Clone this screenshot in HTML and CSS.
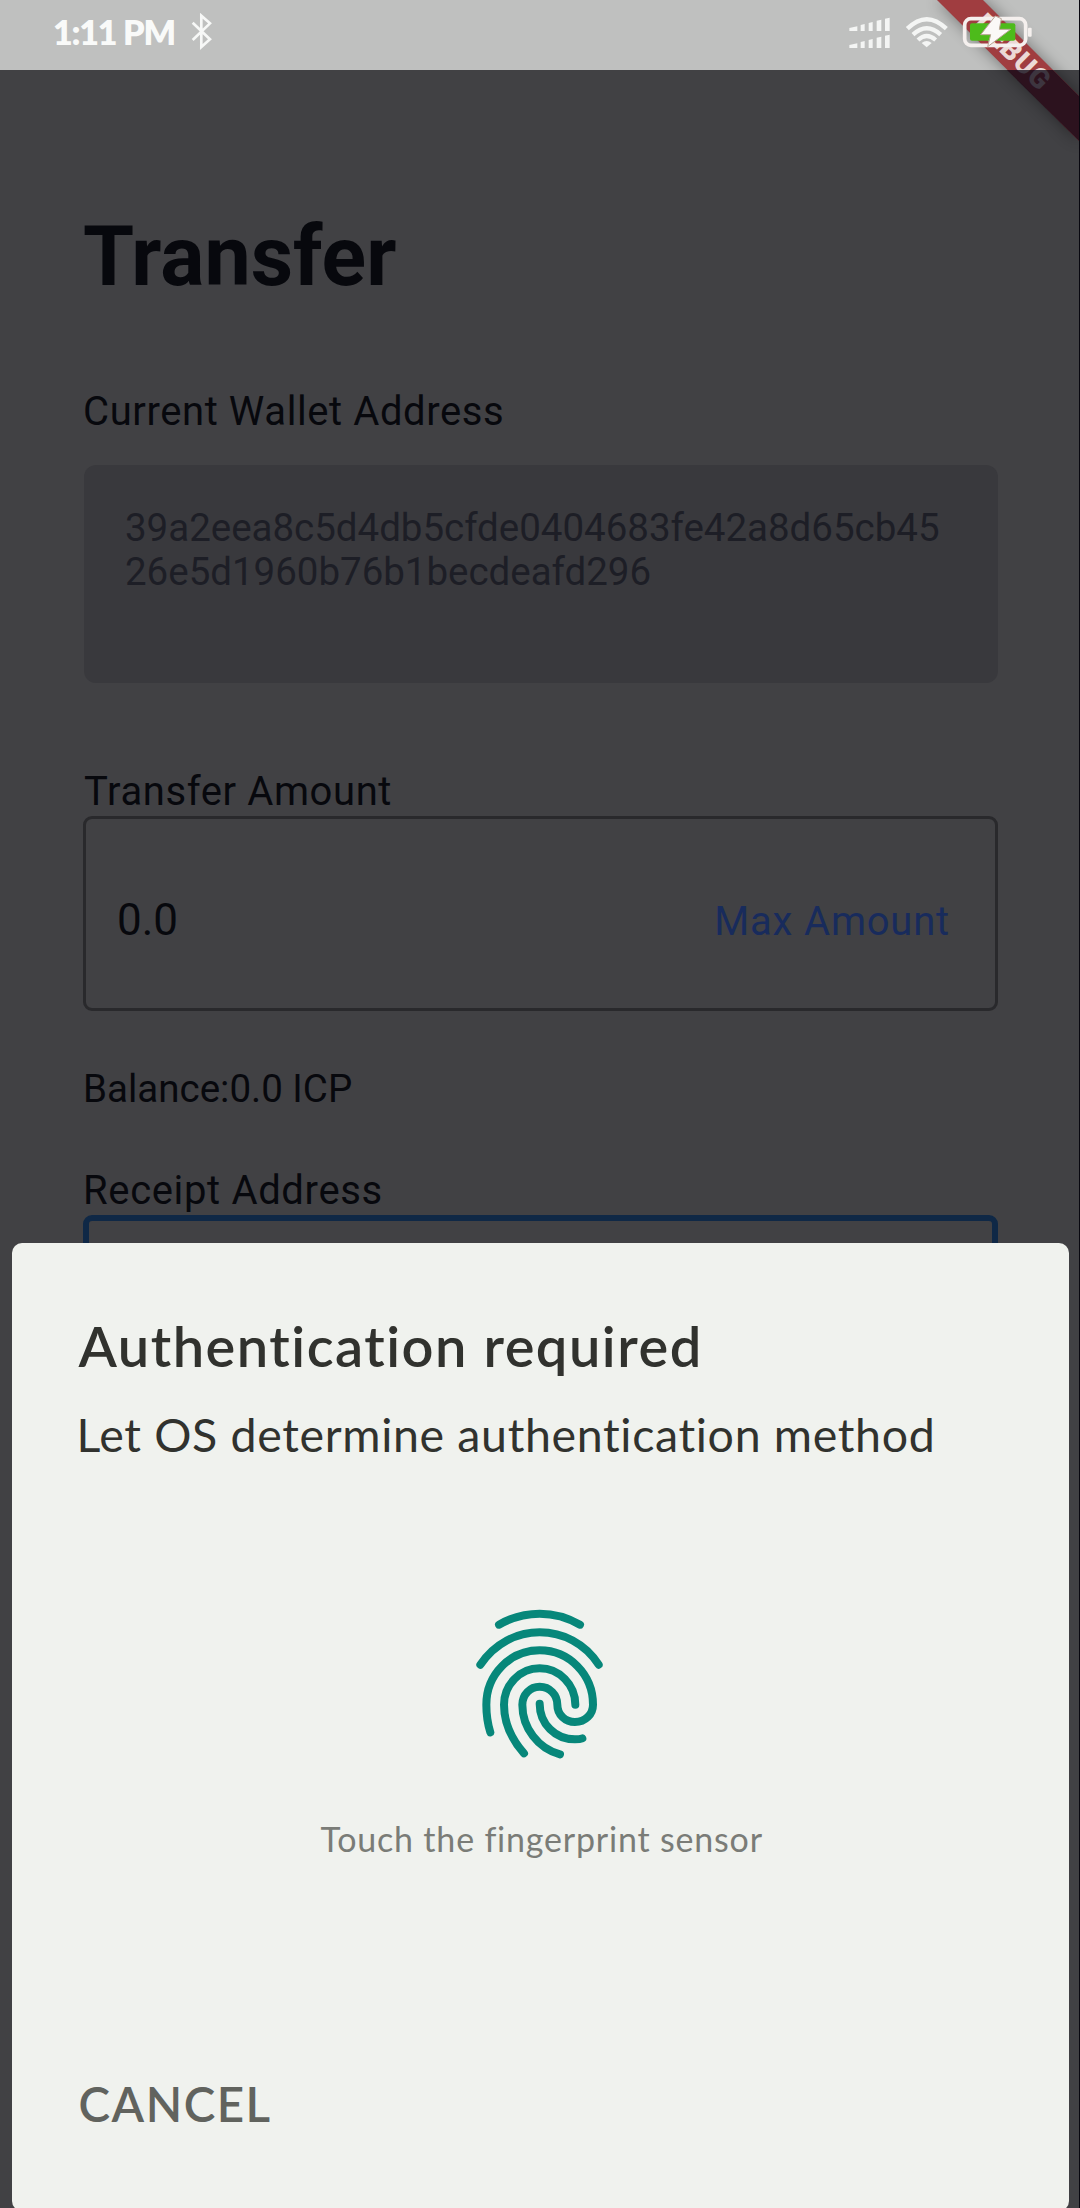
FILE: index.html
```html
<!DOCTYPE html>
<html lang="en">
<head>
<meta charset="utf-8">
<title>Transfer</title>
<link rel="stylesheet" href="styles.css">
</head>
<body>
<div class="screen">
  <svg class="ribbon" viewBox="0 0 200 180" aria-hidden="true">
    <defs>
      <filter id="soft" x="-30%" y="-30%" width="160%" height="160%"><feGaussianBlur stdDeviation="8"/></filter>
    </defs>
    <path d="M57 0H103L200 97V142Z" fill="#000" opacity=".4" filter="url(#soft)"/>
    <path d="M57 0H103L200 97V142Z" fill="#a03d40"/>
    <text class="ribbon-text" transform="translate(133 52) rotate(45)" text-anchor="middle" y="9.5">DEBUG</text>
    <path d="M127 70H173L200 97V142Z" fill="#0b0614" opacity=".78"/>
  </svg>
  <header class="status">
    <span class="clock">1:11 PM</span>
    <svg class="bluetooth" viewBox="0 0 70 110" aria-hidden="true">
      <path d="M8 29L60 79L34 102V8L60 31L8 81" fill="none" stroke="#f7f8f7" stroke-width="8"/>
    </svg>
    <svg class="indicators" viewBox="0 0 780 210" aria-hidden="true">
      <g fill="#f4f5f4">
        <path d="M88 93V84L112 79V93ZM122 93V75L134 72V93ZM146 93V69L158 66V93ZM170 93V62L184 59V93ZM195 93V56L209 53V93Z"/>
        <path d="M88 144V135L112 130V144ZM122 144V126L134 123V144ZM146 144V120L158 117V144ZM170 144V113L184 110V144ZM195 144V107L209 104V144Z"/>
        <path d="M320 142L305 129Q320 117 335 129Z"/>
      </g>
      <g fill="none" stroke="#f4f5f4" stroke-width="13">
        <path d="M262 86Q320 29 379 86"/>
        <path d="M279 104Q320 66 362 104"/>
        <path d="M294 120Q320 96 347 120"/>
      </g>
      <rect x="450" y="70" width="136" height="52" rx="6" fill="#4dbb1b"/>
      <rect x="434" y="56" width="183" height="80" rx="19" fill="none" stroke="#f5f0ee" stroke-width="11"/>
      <rect x="624" y="83" width="11" height="27" rx="3" fill="#f5f0ee"/>
      <path d="M526 48L482 104H512L503 140L572 88H538L544 56Z" fill="#fbf9f7" stroke="#b9a596" stroke-width="3"/>
    </svg>
  </header>

  <main class="page">
    <h1 class="heading">Transfer</h1>
    <p class="label label-wallet">Current Wallet Address</p>
    <div class="address"><span>39a2eea8c5d4db5cfde0404683fe42a8d65cb45</span><br><span>26e5d1960b76b1becdeafd296</span></div>
    <p class="label label-amount">Transfer Amount</p>
    <div class="field">
      <span class="value">0.0</span>
      <span class="max">Max Amount</span>
    </div>
    <p class="balance">Balance:0.0 ICP</p>
    <p class="label label-receipt">Receipt Address</p>
    <div class="field field-focused"></div>
  </main>

  <section class="sheet">
    <h2 class="sheet-title">Authentication required</h2>
    <p class="sheet-text">Let OS determine authentication method</p>
    <svg class="fingerprint" viewBox="0 0 600 600" aria-hidden="true">
      <g fill="none" stroke="#07877a" stroke-width="24" stroke-linecap="round">
        <path d="M177 134Q235 101 299 101T420 134"/>
        <path d="M121 254C165 190 230 157 299 157S435 190 476 254"/>
        <path d="M151 457C142 428 139 404 139 374C139 284 210 211 299 211C388 211 459 284 459 374C459 403 436 426 405 426C376 426 352 404 352 374C352 344 329 320 299 320C270 320 247 344 247 374C247 444 295 506 360 523"/>
        <path d="M252 520C215 478 192 430 192 374C192 314 240 265 299 265C358 265 406 314 406 374"/>
        <path d="M299 371C299 432 346 478 405 478Q420 478 427 475"/>
      </g>
    </svg>
    <p class="hint">Touch the fingerprint sensor</p>
    <span class="cancel">CANCEL</span>
  </section>
</div>
</body>
</html>
```
FILE: styles.css
```css
* { box-sizing: border-box; }
body { margin: 0; background: #414144; }
h1, h2, p { margin: 0; font-weight: 400; }

.screen {
  position: relative;
  width: 1080px;
  height: 2208px;
  overflow: hidden;
  display: flex;
  flex-direction: column;
  background: #414144;
  border-right: 1px solid #08070f;
  font-family: Roboto, sans-serif;
  color: #07080d;
}

.status {
  display: flex;
  flex: none;
  height: 70px;
  background: #bfc0bf;
}
.clock {
  width: 133px;
  margin: 12px 0 0 53px;
  font: 800 34px/40px Lato, sans-serif;
  letter-spacing: -1.2px;
  color: #f9faf9;
  white-space: nowrap;
}
.bluetooth { width: 23.3px; height: 36.7px; margin: 13px 0 0 4px; }
.indicators { position: relative; z-index: 2; width: 260px; height: 70px; margin: 0 -1px 0 auto; }

/* corner banner lies over the status bar and the page */
.ribbon { position: absolute; top: 0; right: -1px; width: 200px; height: 180px; z-index: 1; }
.ribbon-text { font: 900 28px Roboto, sans-serif; letter-spacing: 1px; fill: #ecd9d6; }

.page { flex: none; height: 1173px; padding: 139px 81px 0 84px; overflow: hidden; }
.heading { font-size: 82.5px; line-height: 96px; font-weight: 700; margin-left: -1px; }
.label { font-size: 40px; line-height: 48px; letter-spacing: .6px; }
.label-wallet { margin-top: 83px; letter-spacing: .59px; margin-left: -1px; }
.address {
  height: 218px;
  margin-top: 29px;
  padding: 41px 0 0 41px;
  border-radius: 12px;
  background: #39393d;
  font-size: 38.5px;
  line-height: 44px;
  letter-spacing: -.02px;
  color: #1d1e26;
}
.label-amount { margin-top: 85px; }
.field {
  display: flex;
  justify-content: space-between;
  height: 195px;
  margin: 0 0 0 -1px;
  padding: 71px 45px 0 31px;
  border: 3px solid #29292c;
  border-radius: 9px;
  line-height: 60px;
}
.value { font-size: 44px; }
.max { padding-top: 2px; font-size: 40px; letter-spacing: .8px; color: #182b5c; }
.balance { margin: 54px 0 0 -1px; font-size: 38.5px; line-height: 48px; }
.label-receipt { margin: 53.5px 0 0 -1px; letter-spacing: .65px; }
.field-focused { border: 6px solid #0f2846; }

.sheet {
  display: flex;
  flex-direction: column;
  flex: none;
  height: 968px;
  margin: 0 10px 0 11.5px;
  padding: 71px 68px 0;
  border-radius: 10px;
  background: #f0f2ee;
  font-family: Lato, sans-serif;
  color: #31322e;
}
.sheet-title { margin-left: -1px; font-size: 56px; line-height: 64px; font-weight: 600; letter-spacing: 1.5px; white-space: nowrap; }
.sheet-text { margin: 29px 0 0 -3px; font-size: 46.5px; line-height: 54px; letter-spacing: .65px; white-space: nowrap; }
.fingerprint { width: 200px; height: 200px; margin: 119px 0 0 360.5px; }
.hint { margin: 39px 0 0 241px; font-size: 34px; line-height: 40px; letter-spacing: .8px; color: #7a7c77; white-space: nowrap; }
.cancel { margin: 216px 0 0 -1px; font-size: 47.5px; line-height: 58px; font-weight: 600; letter-spacing: 1.5px; color: #61635e; }
```
